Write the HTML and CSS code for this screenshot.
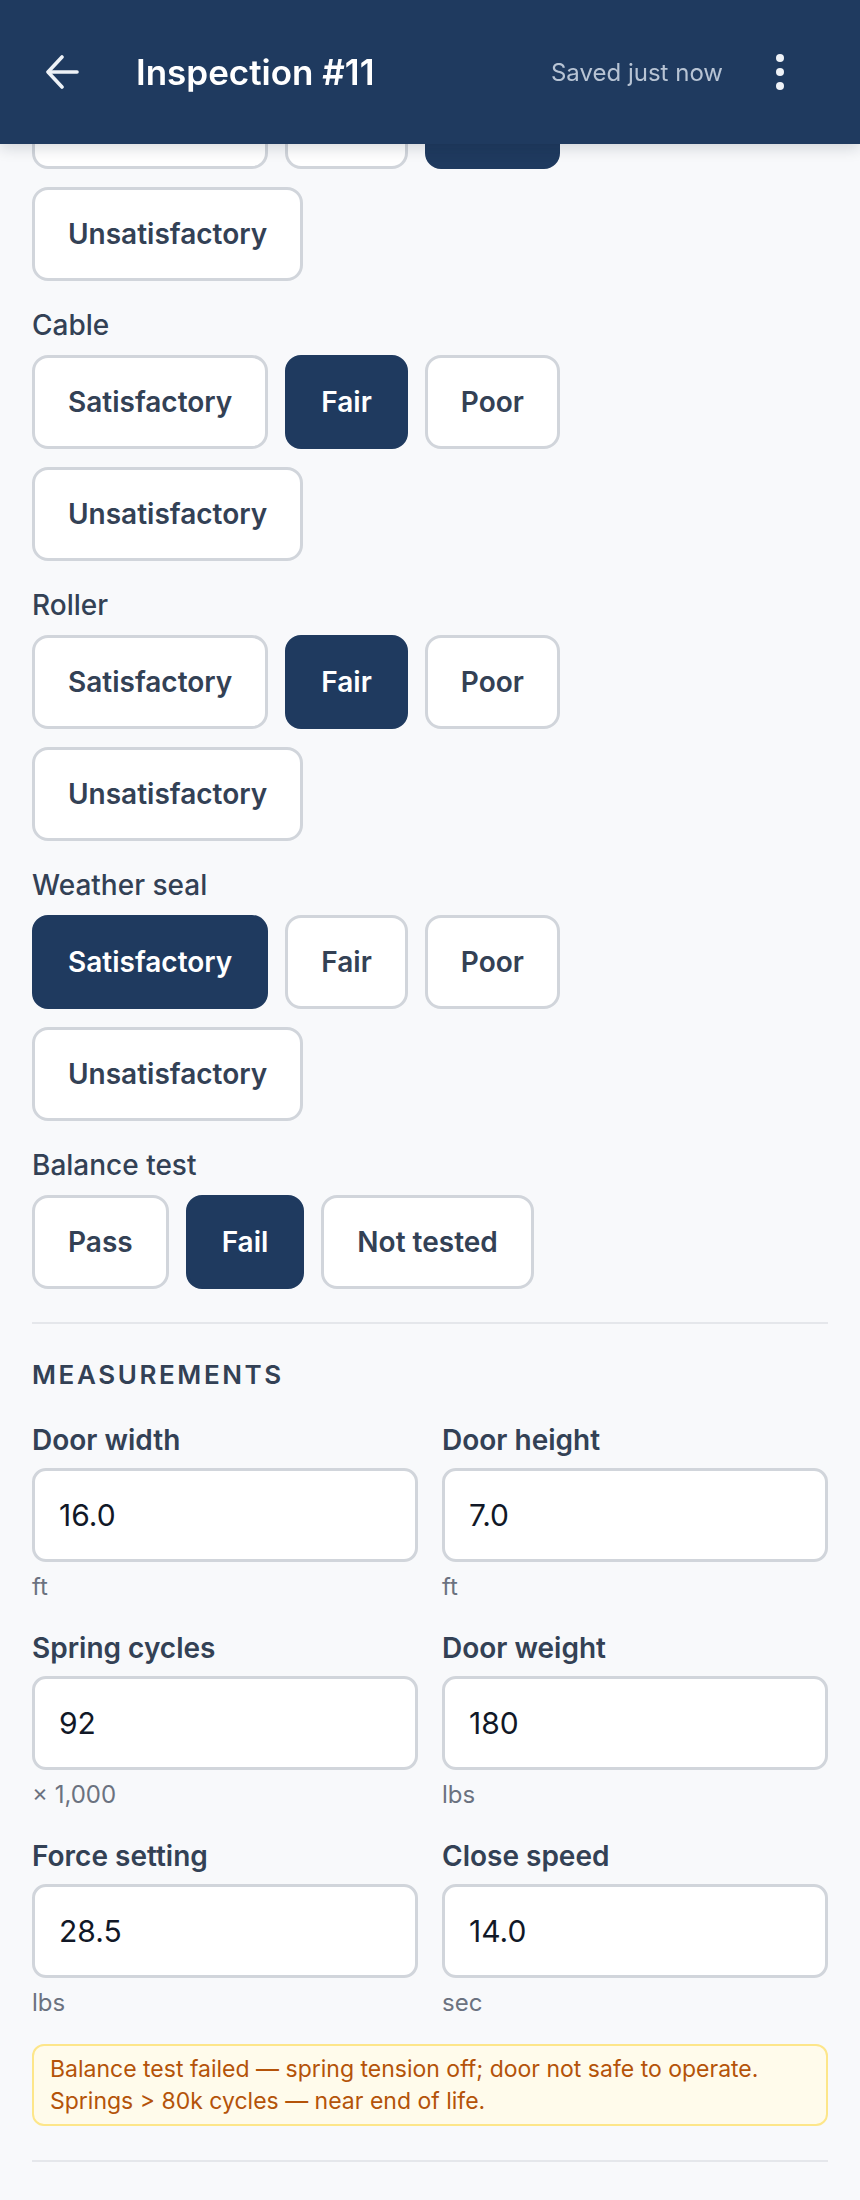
FILE: index.html
```html
<!DOCTYPE html>
<html lang="en">
<head>
  <meta charset="UTF-8">
  <title>Inspection #11</title>
  <meta name="viewport" content="width=device-width, initial-scale=1.0"/>
  <link rel="stylesheet" href="styles.css">
</head>
<body>

<!-- TOP BAR -->
<header class="topbar">
  <button class="icon-btn back-btn" aria-label="Back">
    <svg width="34" height="34" viewBox="0 0 34 34" fill="none" stroke="currentColor" stroke-width="3.6" stroke-linecap="round" stroke-linejoin="round">
      <path d="M31 17H3"/>
      <path d="M16 2L2 17l14 15"/>
    </svg>
  </button>
  <h1 class="title">Inspection #11</h1>
  <span class="saved">Saved just now</span>
  <button class="icon-btn more-btn" aria-label="More">
    <span class="dot"></span><span class="dot"></span><span class="dot"></span>
  </button>
</header>

<main class="content">

  <div class="group">
    <div class="group-label">Springs</div>
    <div class="options">
      <button class="opt">Satisfactory</button>
      <button class="opt">Fair</button>
      <button class="opt selected">Poor</button>
      <button class="opt">Unsatisfactory</button>
    </div>
  </div>

  <div class="group">
    <div class="group-label">Cable</div>
    <div class="options">
      <button class="opt">Satisfactory</button>
      <button class="opt selected">Fair</button>
      <button class="opt">Poor</button>
      <button class="opt">Unsatisfactory</button>
    </div>
  </div>

  <div class="group">
    <div class="group-label">Roller</div>
    <div class="options">
      <button class="opt">Satisfactory</button>
      <button class="opt selected">Fair</button>
      <button class="opt">Poor</button>
      <button class="opt">Unsatisfactory</button>
    </div>
  </div>

  <div class="group">
    <div class="group-label">Weather seal</div>
    <div class="options">
      <button class="opt selected">Satisfactory</button>
      <button class="opt">Fair</button>
      <button class="opt">Poor</button>
      <button class="opt">Unsatisfactory</button>
    </div>
  </div>

  <div class="group">
    <div class="group-label">Balance test</div>
    <div class="options">
      <button class="opt">Pass</button>
      <button class="opt selected">Fail</button>
      <button class="opt">Not tested</button>
    </div>
  </div>

  <hr class="divider">

  <!-- MEASUREMENTS -->
  <h2 class="section-title">Measurements</h2>

  <div class="fields">
    <label class="field">
      <span class="field-label">Door width</span>
      <input class="field-input" value="16.0">
      <span class="hint">ft</span>
    </label>
    <label class="field">
      <span class="field-label">Door height</span>
      <input class="field-input" value="7.0">
      <span class="hint">ft</span>
    </label>
    <label class="field">
      <span class="field-label">Spring cycles</span>
      <input class="field-input" value="92">
      <span class="hint">× 1,000</span>
    </label>
    <label class="field">
      <span class="field-label">Door weight</span>
      <input class="field-input" value="180">
      <span class="hint">lbs</span>
    </label>
    <label class="field">
      <span class="field-label">Force setting</span>
      <input class="field-input" value="28.5">
      <span class="hint">lbs</span>
    </label>
    <label class="field">
      <span class="field-label">Close speed</span>
      <input class="field-input" value="14.0">
      <span class="hint">sec</span>
    </label>
  </div>

  <div class="warning">
    Balance test failed — spring tension off; door not safe to operate.<br>
    Springs &gt; 80k cycles — near end of life.
  </div>

  <hr class="divider bottom">

</main>

</body>
</html>
```

FILE: styles.css
```css
body {
  font-family: Inter, "Noto Sans", sans-serif;
  background: #f8f9fb;
  margin: 0;
  color: #334155;
}

button {
  font-family: inherit;
}

/* top bar */
.topbar {
  position: fixed;
  top: 0;
  left: 0;
  right: 0;
  z-index: 10;
  height: 144px;
  box-sizing: border-box;
  display: flex;
  align-items: center;
  padding: 0 76px 0 46px;
  background: #1f3a5f;
  box-shadow: 0 4px 14px rgba(15, 23, 42, 0.16);
}

.icon-btn {
  background: none;
  border: none;
  padding: 0;
  cursor: pointer;
  color: #eef2f7;
}

.back-btn {
  display: flex;
  width: 34px;
  height: 34px;
}

.title {
  margin: 0 0 0 56px;
  font-size: 35px;
  font-weight: 600;
  color: #ffffff;
  flex: 1;
}

.saved {
  font-size: 24px;
  color: #b8c4d4;
}

.more-btn {
  margin-left: 53px;
  width: 8px;
  display: flex;
  flex-direction: column;
  gap: 6px;
}

.dot {
  display: block;
  width: 8px;
  height: 8px;
  border-radius: 50%;
  background: #eef2f7;
}

/* content */
.content {
  padding: 27px 32px 40px;
}

.group + .group {
  margin-top: 26px;
}

.group-label {
  font-size: 28px;
  line-height: 36px;
  font-weight: 500;
  color: #334155;
  margin-bottom: 12px;
}

.options {
  display: flex;
  flex-wrap: wrap;
  gap: 18px 17px;
}

.opt {
  height: 94px;
  padding: 0 33px;
  background: #fff;
  border: 3px solid #d1d5db;
  border-radius: 16px;
  font-size: 28px;
  font-weight: 600;
  color: #334155;
  cursor: pointer;
}

.opt.selected {
  background: #1f3a5f;
  border-color: #1f3a5f;
  color: #fff;
}

.divider {
  border: none;
  height: 2px;
  background: #e5e7eb;
  margin: 33px 0 0;
}

.divider.bottom {
  margin-top: 34px;
}

.section-title {
  margin: 33px 0 29px;
  font-size: 26px;
  line-height: 36px;
  font-weight: 600;
  letter-spacing: 2.6px;
  text-transform: uppercase;
  color: #334155;
}

.fields {
  display: grid;
  grid-template-columns: 1fr 1fr;
  gap: 27px 24px;
}

.field {
  display: flex;
  flex-direction: column;
}

.field-label {
  font-size: 28px;
  line-height: 36px;
  font-weight: 600;
  color: #334155;
  margin-bottom: 10px;
}

.field-input {
  height: 94px;
  box-sizing: border-box;
  width: 100%;
  padding: 0 24px;
  background: #fff;
  border: 3px solid #d1d5db;
  border-radius: 14px;
  font-family: inherit;
  font-size: 30px;
  color: #111827;
}

.hint {
  margin-top: 9px;
  font-size: 24px;
  line-height: 32px;
  color: #6b7280;
}

.warning {
  margin-top: 25px;
  padding: 7px 16px;
  background: #fffbeb;
  border: 2px solid #fde68a;
  border-radius: 12px;
  font-size: 23px;
  line-height: 32px;
  color: #b45309;
}
```
